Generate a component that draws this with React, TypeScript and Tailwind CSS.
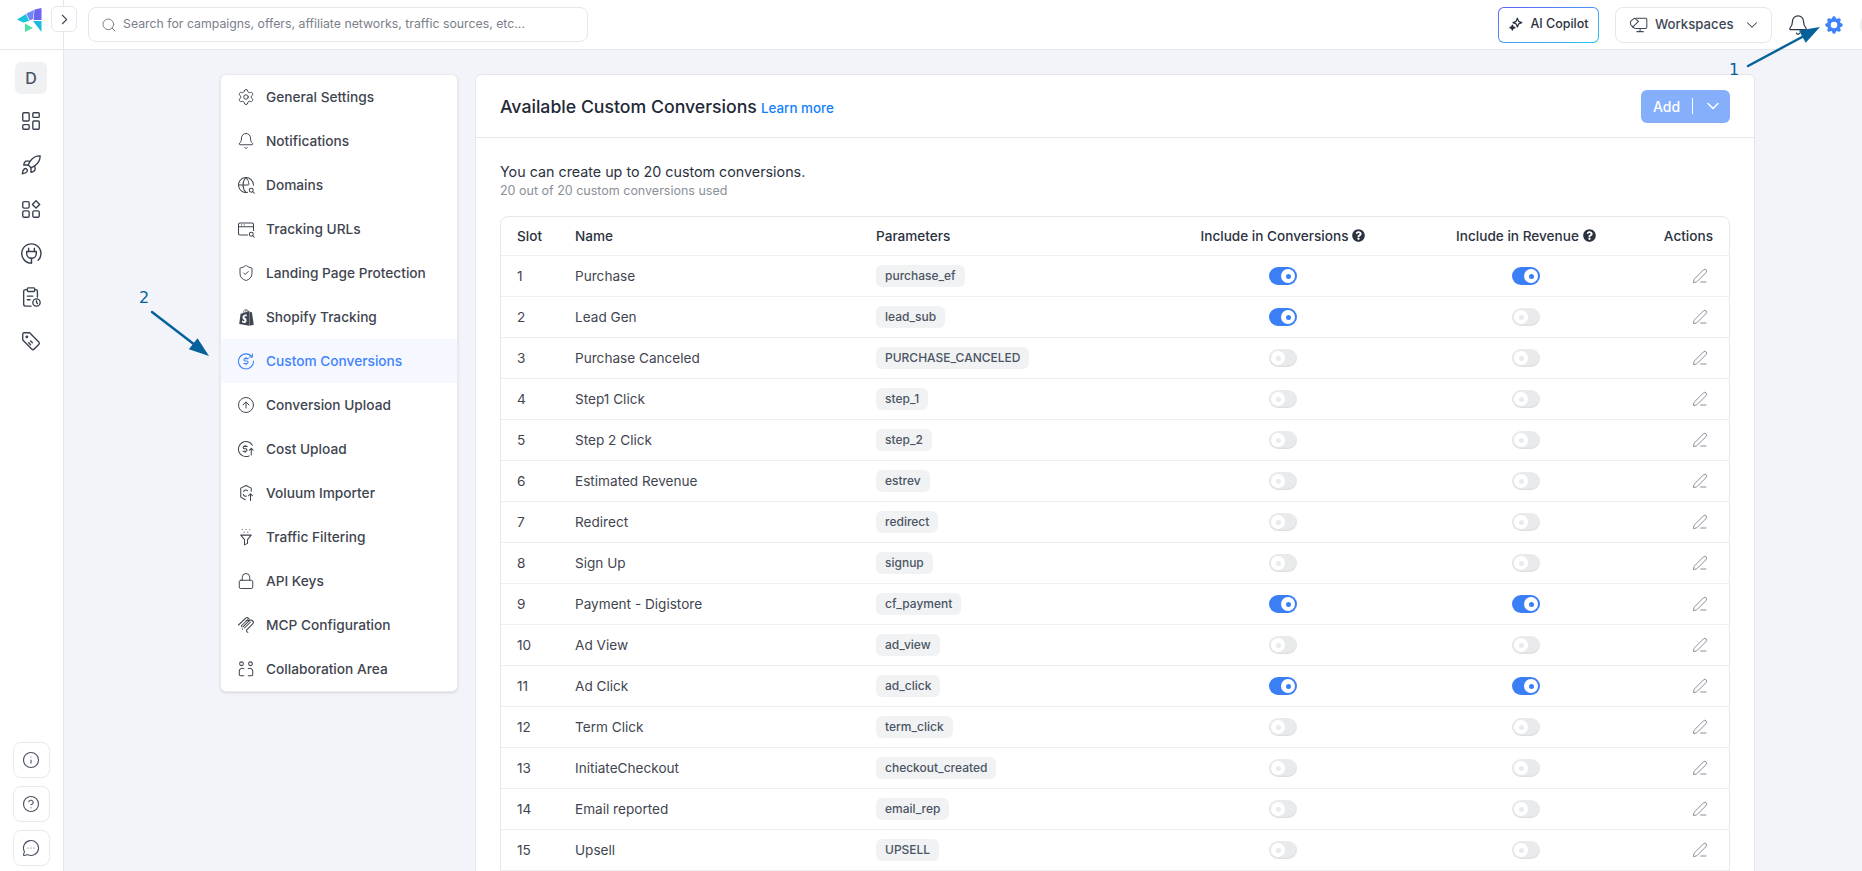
import {
  Settings, Bell, ShieldCheck, CircleArrowUp, Lock, Info, CircleHelp, MessageCircleMore,
  LayoutDashboard, Rocket, ChevronRight, ChevronDown, Search, PenLine,
} from 'lucide-react';
import { FaQuestionCircle, FaShopify } from 'react-icons/fa';
import { HiCog } from 'react-icons/hi';
import type { ReactNode } from 'react';

function Ico({ children, size = 18, sw = 1.4 }: { children: ReactNode; size?: number; sw?: number }) {
  return (
    <svg width={size} height={size} viewBox="0 0 24 24" fill="none" stroke="currentColor" strokeWidth={sw} strokeLinecap="round" strokeLinejoin="round">
      {children}
    </svg>
  );
}

const miniSearch = (
  <>
    <circle cx="19" cy="19" r="2.6" />
    <path d="m21 21 2 2" />
  </>
);

const navItems: { label: string; icon: ReactNode; active?: boolean }[] = [
  { label: 'General Settings', icon: <Settings size={18} strokeWidth={1.3} /> },
  { label: 'Notifications', icon: <Bell size={18} strokeWidth={1.3} /> },
  {
    label: 'Domains',
    icon: (
      <Ico>
        <path d="M14 21.8A10 10 0 1 1 22 12" />
        <path d="M2 12h13" />
        <path d="M12 2c-3 3-4 6.500-4 10s1 7 4 10" />
        <path d="M12 2c2.500 2.500 3.800 5.500 4 9" />
        {miniSearch}
      </Ico>
    ),
  },
  {
    label: 'Tracking URLs',
    icon: (
      <Ico>
        <path d="M14 20H4a2 2 0 0 1-2-2V6a2 2 0 0 1 2-2h16a2 2 0 0 1 2 2v8" />
        <path d="M2 9h20" />
        <path d="M6 6.500h.01M9.500 6.500h.01" />
        {miniSearch}
      </Ico>
    ),
  },
  { label: 'Landing Page Protection', icon: <ShieldCheck size={18} strokeWidth={1.3} /> },
  { label: 'Shopify Tracking', icon: <FaShopify size={17} /> },
  {
    label: 'Custom Conversions',
    active: true,
    icon: (
      <Ico>
        <path d="M20 6.500A10 10 0 1 0 22 12" />
        <path d="M20.500 2.500v4.200h-4.200" />
        <path d="M15 8.800h-4.200a1.600 1.600 0 0 0 0 3.200h2.400a1.600 1.600 0 0 1 0 3.200H9" />
        <path d="M12 7v1.800M12 15.200V17" />
      </Ico>
    ),
  },
  { label: 'Conversion Upload', icon: <CircleArrowUp size={18} strokeWidth={1.3} /> },
  {
    label: 'Cost Upload',
    icon: (
      <Ico>
        <path d="M20.500 7A10 10 0 1 0 16 21.200" />
        <path d="M13.500 8.500h-3.700a1.600 1.600 0 0 0 0 3.200h1.900a1.600 1.600 0 0 1 0 3.200H8" />
        <path d="M10.700 7v1.500M10.700 15v1.500" />
        <path d="M19 20v-9M16.500 13.500 19 11l2.500 2.500" />
      </Ico>
    ),
  },
  {
    label: 'Voluum Importer',
    icon: (
      <Ico>
        <path d="m12 2 7 3.500v4" />
        <path d="M12 2 5 5.500v12L11 21" />
        <path d="M9 10a3 3 0 0 1 5-1M8.500 14a3 3 0 0 0 4 2" />
        <path d="M18 22v-9M15.500 15.500 18 13l2.500 2.500" />
      </Ico>
    ),
  },
  {
    label: 'Traffic Filtering',
    icon: (
      <Ico>
        <path d="M5 9.500h14l-5 6v5l-4 2v-7z" />
        <path d="M7 2h.01M12 2h.01M17 2h.01M9.500 5.500h.01M14.500 5.500h.01" />
      </Ico>
    ),
  },
  { label: 'API Keys', icon: <Lock size={18} strokeWidth={1.3} /> },
  {
    label: 'MCP Configuration',
    icon: (
      <Ico>
        <path d="M2 12 12 2.500a3 3 0 0 1 4 4L8 14.500" />
        <path d="M12 6.500a3 3 0 0 1 4 0 3 3 0 0 1 5 4l-8 8a1.500 1.500 0 0 0 0 2l1.500 1.500" />
        <path d="M14 5 6 13a3 3 0 0 0 0 1M10 16l8-8M7.500 17l-.5.5" />
      </Ico>
    ),
  },
  {
    label: 'Collaboration Area',
    icon: (
      <Ico>
        <circle cx="6" cy="5" r="2.500" />
        <circle cx="18" cy="5" r="2.500" />
        <path d="M9 21H5a2 2 0 0 1-2-2v-4a4 4 0 0 1 6-3.500" />
        <path d="M15 21h4a2 2 0 0 0 2-2v-4a4 4 0 0 0-6-3.500" />
      </Ico>
    ),
  },
];

const rows: { name: string; param: string; conv?: boolean; rev?: boolean }[] = [
  { name: 'Purchase', param: 'purchase_ef', conv: true, rev: true },
  { name: 'Lead Gen', param: 'lead_sub', conv: true },
  { name: 'Purchase Canceled', param: 'PURCHASE_CANCELED' },
  { name: 'Step1 Click', param: 'step_1' },
  { name: 'Step 2 Click', param: 'step_2' },
  { name: 'Estimated Revenue', param: 'estrev' },
  { name: 'Redirect', param: 'redirect' },
  { name: 'Sign Up', param: 'signup' },
  { name: 'Payment - Digistore', param: 'cf_payment', conv: true, rev: true },
  { name: 'Ad View', param: 'ad_view' },
  { name: 'Ad Click', param: 'ad_click', conv: true, rev: true },
  { name: 'Term Click', param: 'term_click' },
  { name: 'InitiateCheckout', param: 'checkout_created' },
  { name: 'Email reported', param: 'email_rep' },
  { name: 'Upsell', param: 'UPSELL' },
];

function Toggle({ on }: { on?: boolean }) {
  if (on) {
    return (
      <div className="flex h-[18px] w-[28px] items-center justify-end rounded-full bg-[#3b7ff6] pr-[2px]">
        <div className="flex h-[14px] w-[14px] items-center justify-center rounded-full bg-white">
          <div className="h-[5px] w-[5px] rounded-full bg-[#3b7ff6]" />
        </div>
      </div>
    );
  }
  return (
    <div className="flex h-[18px] w-[28px] items-center rounded-full bg-[#e9eaec] pl-[2px] shadow-[inset_0_-1px_2px_rgba(0,0,0,0.06)]">
      <div className="flex h-[14px] w-[14px] items-center justify-center rounded-full bg-white">
        <div className="h-[5px] w-[5px] rounded-full bg-[#e9eaec]" />
      </div>
    </div>
  );
}

const gridCols = 'grid grid-cols-[74px_301px_274px_266px_220px_93px] items-center';

function SideButton({ children }: { children: ReactNode }) {
  return (
    <div className="flex h-[36px] w-[37px] items-center justify-center rounded-lg border border-[#e8e9ec] bg-white text-[#4a5263]">
      {children}
    </div>
  );
}

export default function App() {
  return (
    <div className="relative flex h-screen w-full flex-col overflow-hidden bg-white text-[#2b3240] [font-family:Inter,sans-serif]">
      {/* top bar */}
      <div className="flex h-[50px] shrink-0 items-center border-b border-[#e5e7eb] bg-white">
        <div className="flex h-full w-[64px] shrink-0 items-start border-r border-[#e5e7eb] pl-[17px] pt-[8px]">
          <svg width="25" height="24" viewBox="0 0 25 24">
            <polygon points="0,11.500 9,6 12,13 6,14.500" fill="#17c4dc" />
            <polygon points="9.500,5.500 17,2 16,11 12.500,12.500" fill="#6f86f6" />
            <polygon points="17.500,1.500 24.500,0 24.500,12 16.500,12" fill="#6d64f2" />
            <polygon points="8,15.500 16,20 8,24" fill="#4be3a3" />
            <polygon points="16,13 24.500,13 24.500,24" fill="#19bcdc" />
          </svg>
        </div>
        <div className="ml-[24px] flex h-[35px] w-[500px] items-center gap-[6px] rounded-lg border border-[#e5e7eb] px-[12px] text-[12.3px] text-[#7b808a]">
          <Search size={16} strokeWidth={1.5} className="shrink-0" />
          <span>Search for campaigns, offers, affiliate networks, traffic sources, etc...</span>
        </div>

        <div className="ml-auto flex items-center">
          <div className="rounded-md bg-gradient-to-br from-[#5b5ff0] to-[#19c9ee] p-px">
            <div className="flex h-[34px] w-[99px] items-center justify-center gap-[7px] rounded-[5px] bg-white text-[12.5px] font-medium">
              <svg width="15" height="15" viewBox="0 0 24 24" fill="none" stroke="currentColor" strokeWidth="2" strokeLinejoin="round">
                <path d="m15 2 2 5 5 2-5 2-2 5-2-5-5-2 5-2z" />
                <path d="m7 13 1.200 2.800L11 17l-2.800 1.200L7 21l-1.200-2.800L3 17l2.800-1.200z" fill="currentColor" />
              </svg>
              AI Copilot
            </div>
          </div>
          <div className="ml-[16px] flex h-[36px] w-[157px] items-center rounded-lg border border-[#e5e7eb] pl-[13px] text-[13.2px] font-medium text-[#3f4756]">
            <Ico size={19} sw={1.3}>
              <path d="M9 4h12a1.500 1.500 0 0 1 1.500 1.500v10a1.500 1.500 0 0 1-1.500 1.500H9" />
              <path d="M14 17v4M10 21h8" />
              <path d="M2 8l5-4 5 4-7 7-3-3z" />
              <path d="M4 15l4 2" />
            </Ico>
            <span className="ml-[7px]">Workspaces</span>
            <ChevronDown size={18} strokeWidth={1.4} className="ml-[9px]" />
          </div>
          <Bell size={22} strokeWidth={1.3} className="ml-[15px] text-[#2b3240]" />
          <HiCog size={22} className="ml-[14px] text-[#3f82fb]" />
          <div className="-mr-[30px] ml-[15px] h-[32px] w-[32px] rounded-full bg-[#eceef1]" />
        </div>
      </div>

      <button className="absolute left-[51px] top-[6px] flex h-[26px] w-[26px] items-center justify-center rounded-md border border-[#e5e7eb] bg-white text-[#3f4756]">
        <ChevronRight size={17} strokeWidth={1.5} />
      </button>

      <div className="flex min-h-0 flex-1">
        {/* left rail */}
        <div className="flex w-[64px] shrink-0 flex-col items-center justify-between border-r border-[#e5e7eb] bg-white pb-[5px] pt-[12px] pr-[1px]">
          <div className="flex flex-col items-center text-[#394150]">
            <div className="flex h-[32px] w-[32px] items-center justify-center rounded-md bg-[#f0f1f3] text-[16px] font-medium text-[#4a5263]">D</div>
            <div className="mt-[5px] flex h-[44px] items-center"><LayoutDashboard size={22} strokeWidth={1.5} /></div>
            <div className="flex h-[44px] items-center"><Rocket size={22} strokeWidth={1.5} /></div>
            <div className="flex h-[44px] items-center">
              <Ico size={22} sw={1.5}>
                <rect x="3" y="4" width="7" height="7" rx="1.500" />
                <path d="m17.500 3 4 4-4 4-4-4z" />
                <rect x="3" y="14" width="7" height="7" rx="1.500" />
                <rect x="14" y="14" width="7" height="7" rx="1.500" />
              </Ico>
            </div>
            <div className="flex h-[44px] items-center">
              <Ico size={23} sw={1.5}>
                <path d="M12 22a10 10 0 1 1 7-3" />
                <path d="M9 6.500V10M15 6.500V10" />
                <path d="M7 10h10v2a5 5 0 0 1-10 0z" />
                <path d="M12 17v5" />
              </Ico>
            </div>
            <div className="flex h-[44px] items-center">
              <Ico size={22} sw={1.5}>
                <rect x="8" y="2" width="8" height="4" rx="1" />
                <path d="M16 4h1a2 2 0 0 1 2 2v6M8 4H6a2 2 0 0 0-2 2v14a2 2 0 0 0 2 2h6" />
                <path d="M8 11h6M8 15h3" />
                <circle cx="18" cy="18" r="4" />
                <path d="M18 16v2l1 1" />
              </Ico>
            </div>
            <div className="flex h-[44px] items-center">
              <Ico size={22} sw={1.5}>
                <path d="M3 4.500A1.500 1.500 0 0 1 4.500 3h6l10 10a2 2 0 0 1 0 2.800l-5 5a2 2 0 0 1-2.800 0L3 11z" />
                <circle cx="7.500" cy="7.500" r=".8" />
                <path d="m11.500 12 2 2M9.500 14l2 2" />
              </Ico>
            </div>
          </div>
          <div className="flex flex-col gap-[8px]">
            <SideButton><Info size={18} strokeWidth={1.5} /></SideButton>
            <SideButton><CircleHelp size={18} strokeWidth={1.5} /></SideButton>
            <SideButton><MessageCircleMore size={18} strokeWidth={1.5} /></SideButton>
          </div>
        </div>

        {/* page */}
        <div className="flex min-w-0 flex-1 items-start gap-[17px] overflow-hidden bg-[#f3f4f9] pl-[156px] pt-[24px]">
          <div className="w-[238px] shrink-0 overflow-hidden rounded-md border border-[#e9eaee] bg-white shadow-sm">
            {navItems.map(item => (
              <div
                key={item.label}
                className={`flex h-[44px] items-center gap-[11px] pl-[16px] text-[13.7px] font-[450] ${item.active ? 'bg-[#f5f8ff] text-[#3f82fb]' : 'text-[#3f4550]'}`}
              >
                <span className="flex w-[18px] justify-center">{item.icon}</span>
                {item.label}
              </div>
            ))}
          </div>

          <div className="w-[1280px] shrink-0 rounded-md border border-[#e5e7eb] bg-white">
            <div className="flex h-[63px] items-center justify-between border-b border-[#e5e7eb] px-[24px]">
              <div className="mt-[2px] flex items-baseline gap-[4px]">
                <span className="text-[17.7px] font-medium text-[#1f2937]">Available Custom Conversions</span>
                <span className="text-[13.4px] font-medium text-[#0f7fff]">Learn more</span>
              </div>
              <div className="flex h-[33px] w-[89px] items-center rounded-md bg-[#85aefb] text-[14px] font-medium text-white">
                <span className="pl-[12px]">Add</span>
                <div className="ml-[12px] h-[16px] w-px bg-white" />
                <ChevronDown size={20} strokeWidth={1.8} className="ml-[10px]" />
              </div>
            </div>

            <div className="px-[24px] pt-[24px]">
              <p className="text-[14.3px] leading-[20px] text-[#2b3240]">You can create up to 20 custom conversions.</p>
              <p className="text-[12.5px] leading-[18px] text-[#8a8f98]">20 out of 20 custom conversions used</p>

              <div className="mt-[16px] rounded-lg border border-[#e5e7eb]">
                <div className={`${gridCols} h-[38px] text-[13.6px] font-[450] text-[#2b3240]`}>
                  <span className="pl-[16px]">Slot</span>
                  <span>Name</span>
                  <span>Parameters</span>
                  <span className="flex items-center justify-center gap-[4px]">
                    Include in Conversions <FaQuestionCircle size={13} />
                  </span>
                  <span className="flex items-center justify-center gap-[4px]">
                    Include in Revenue <FaQuestionCircle size={13} />
                  </span>
                  <span className="pr-[16px] text-right">Actions</span>
                </div>
                {rows.map((r, i) => (
                  <div key={r.name} className={`${gridCols} h-[41px] border-t border-[#eceef0] text-[13.6px] text-[#3f4550]`}>
                    <span className="pl-[16px]">{i + 1}</span>
                    <span>{r.name}</span>
                    <span>
                      <span className="inline-block h-[22px] rounded-md bg-[#f1f2f4] px-[9px] text-[12px] font-[450] leading-[22px] text-[#4b5563]">{r.param}</span>
                    </span>
                    <span className="flex justify-center"><Toggle on={r.conv} /></span>
                    <span className="flex justify-center"><Toggle on={r.rev} /></span>
                    <span className="flex justify-end pr-[21px] text-[#6b7280]"><PenLine size={16} strokeWidth={1.2} /></span>
                  </div>
                ))}
                <div className="h-[41px] border-t border-[#eceef0]" />
              </div>
            </div>
          </div>
        </div>
      </div>

      {/* annotation arrows */}
      <svg className="pointer-events-none absolute left-0 top-0 h-[871px] w-[1862px]" viewBox="0 0 1862 871">
        <line x1="1748" y1="66" x2="1804" y2="36" stroke="#04619a" strokeWidth="2.500" strokeLinecap="round" />
        <polygon points="1820,27 1805.700,42.700 1799,30.400" fill="#04619a" />
        <line x1="152" y1="312" x2="195" y2="345" stroke="#04619a" strokeWidth="2.500" strokeLinecap="round" />
        <polygon points="209,356 197.500,338.300 188.900,349.300" fill="#04619a" />
      </svg>
      <span className="absolute left-[1729px] top-[59px] text-[16px] leading-[22px] text-[#04619a] [font-family:'DejaVu_Sans',sans-serif]">1</span>
      <span className="absolute left-[139px] top-[287px] text-[16px] leading-[22px] text-[#04619a] [font-family:'DejaVu_Sans',sans-serif]">2</span>
    </div>
  );
}
